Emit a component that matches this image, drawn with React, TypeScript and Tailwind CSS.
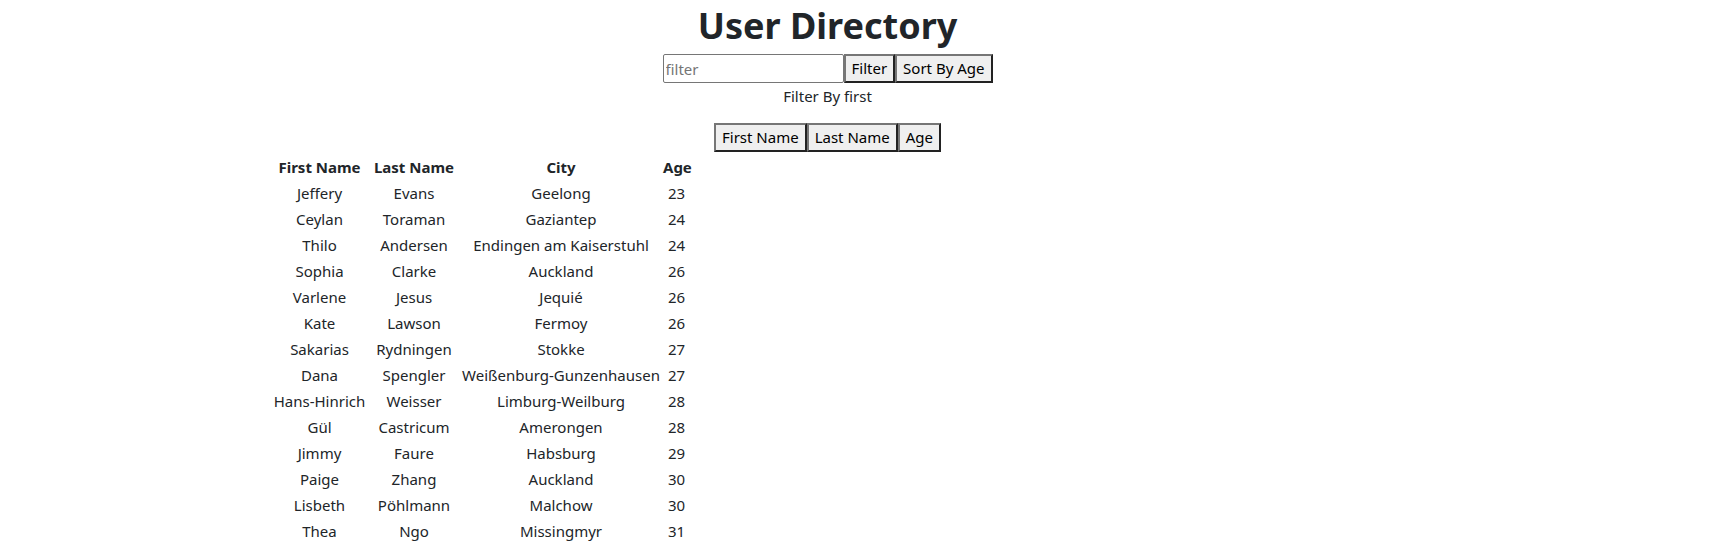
import { useState } from 'react';

interface User {
  first: string;
  last: string;
  city: string;
  age: number;
}

const users: User[] = [
  { first: 'Jeffery', last: 'Evans', city: 'Geelong', age: 23 },
  { first: 'Ceylan', last: 'Toraman', city: 'Gaziantep', age: 24 },
  { first: 'Thilo', last: 'Andersen', city: 'Endingen am Kaiserstuhl', age: 24 },
  { first: 'Sophia', last: 'Clarke', city: 'Auckland', age: 26 },
  { first: 'Varlene', last: 'Jesus', city: 'Jequié', age: 26 },
  { first: 'Kate', last: 'Lawson', city: 'Fermoy', age: 26 },
  { first: 'Sakarias', last: 'Rydningen', city: 'Stokke', age: 27 },
  { first: 'Dana', last: 'Spengler', city: 'Weißenburg-Gunzenhausen', age: 27 },
  { first: 'Hans-Hinrich', last: 'Weisser', city: 'Limburg-Weilburg', age: 28 },
  { first: 'Gül', last: 'Castricum', city: 'Amerongen', age: 28 },
  { first: 'Jimmy', last: 'Faure', city: 'Habsburg', age: 29 },
  { first: 'Paige', last: 'Zhang', city: 'Auckland', age: 30 },
  { first: 'Lisbeth', last: 'Pöhlmann', city: 'Malchow', age: 30 },
  { first: 'Thea', last: 'Ngo', city: 'Missingmyr', age: 31 },
];

const btn =
  "h-[29px] px-[6px] bg-[#efefef] border-2 border-t-[#767676] border-l-[#767676] border-b-[#222] border-r-[#222] text-[15px] leading-none text-black";

const App = () => {
  const [filter, setFilter] = useState('');

  return (
    <div className="min-h-screen bg-white text-[#212529] font-['Noto_Sans',sans-serif] text-[15px]">
      <div className="w-[1655px] flex flex-col items-center">
        <h1 className="mt-[2px] text-[36px] font-bold leading-[48px]">User Directory</h1>
        <div className="mt-[4px] flex">
          <input
            value={filter}
            onChange={(e) => setFilter(e.target.value)}
            placeholder="filter"
            className="w-[181px] h-[29px] px-[2px] border border-[#767676] rounded-[2px] text-[15px] placeholder:text-[#757575] outline-none"
          />
          <button className={btn}>Filter</button>
          <button className={btn}>Sort By Age</button>
        </div>
        <p className="mt-[2px] leading-[22px]">Filter By first</p>
        <div className="mt-[16px] flex">
          <button className={btn}>First Name</button>
          <button className={btn}>Last Name</button>
          <button className={btn}>Age</button>
        </div>
      </div>
      <table className="mt-[2px] ml-[270px] table-fixed w-[420px]">
        <thead>
          <tr className="h-[26px]">
            <th className="w-[99px] font-bold text-center whitespace-nowrap">First Name</th>
            <th className="w-[90px] font-bold text-center whitespace-nowrap">Last Name</th>
            <th className="w-[204px] font-bold text-center whitespace-nowrap">City</th>
            <th className="w-[27px] font-bold text-center whitespace-nowrap">Age</th>
          </tr>
        </thead>
        <tbody>
          {users.map((u) => (
            <tr key={u.first} className="h-[26px]">
              <td className="text-center whitespace-nowrap">{u.first}</td>
              <td className="text-center whitespace-nowrap">{u.last}</td>
              <td className="text-center whitespace-nowrap">{u.city}</td>
              <td className="text-center whitespace-nowrap">{u.age}</td>
            </tr>
          ))}
        </tbody>
      </table>
    </div>
  );
};

export default App;
